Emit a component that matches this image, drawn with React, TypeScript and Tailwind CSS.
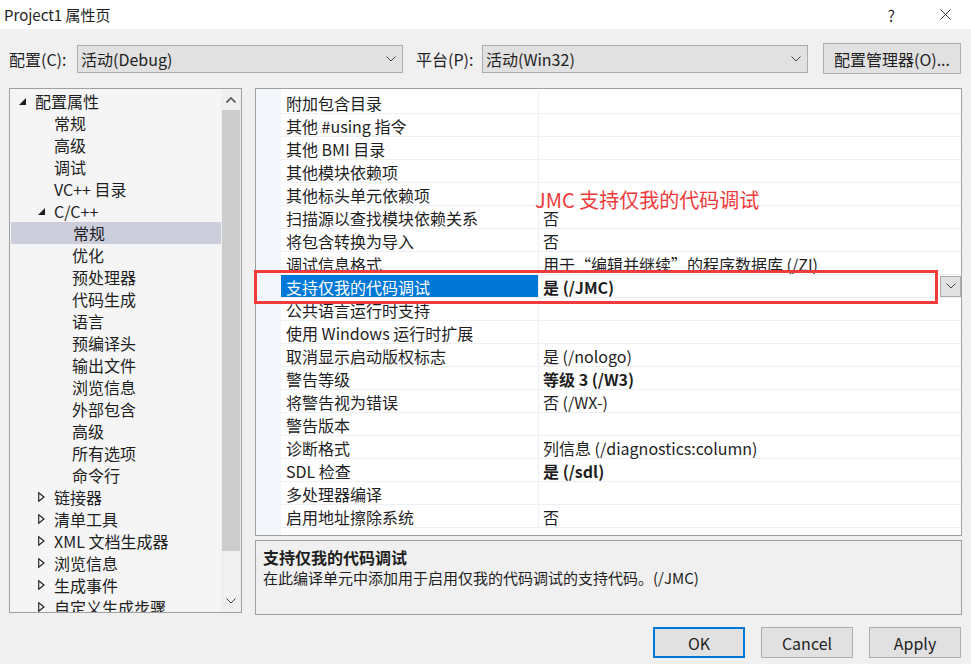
import React from 'react';

// ── data ──────────────────────────────────────────────────────────────────────

type TreeItem = { label: string; level: 0 | 1 | 2; arrow?: 'open' | 'closed'; selected?: boolean };

const TREE: TreeItem[] = [
  { label: '配置属性', level: 0, arrow: 'open' },
  { label: '常规', level: 1 },
  { label: '高级', level: 1 },
  { label: '调试', level: 1 },
  { label: 'VC++ 目录', level: 1 },
  { label: 'C/C++', level: 1, arrow: 'open' },
  { label: '常规', level: 2, selected: true },
  { label: '优化', level: 2 },
  { label: '预处理器', level: 2 },
  { label: '代码生成', level: 2 },
  { label: '语言', level: 2 },
  { label: '预编译头', level: 2 },
  { label: '输出文件', level: 2 },
  { label: '浏览信息', level: 2 },
  { label: '外部包含', level: 2 },
  { label: '高级', level: 2 },
  { label: '所有选项', level: 2 },
  { label: '命令行', level: 2 },
  { label: '链接器', level: 1, arrow: 'closed' },
  { label: '清单工具', level: 1, arrow: 'closed' },
  { label: 'XML 文档生成器', level: 1, arrow: 'closed' },
  { label: '浏览信息', level: 1, arrow: 'closed' },
  { label: '生成事件', level: 1, arrow: 'closed' },
  { label: '自定义生成步骤', level: 1, arrow: 'closed' },
];

const INDENT = ['pl-[9px]', 'pl-[28px]', 'pl-[46px]'];

type Prop = { name: string; value?: string; bold?: boolean; selected?: boolean };

const PROPS: Prop[] = [
  { name: '附加包含目录' },
  { name: '其他 #using 指令' },
  { name: '其他 BMI 目录' },
  { name: '其他模块依赖项' },
  { name: '其他标头单元依赖项' },
  { name: '扫描源以查找模块依赖关系', value: '否' },
  { name: '将包含转换为导入', value: '否' },
  { name: '调试信息格式', value: '用于“编辑并继续”的程序数据库 (/ZI)' },
  { name: '支持仅我的代码调试', value: '是 (/JMC)', bold: true, selected: true },
  { name: '公共语言运行时支持' },
  { name: '使用 Windows 运行时扩展' },
  { name: '取消显示启动版权标志', value: '是 (/nologo)' },
  { name: '警告等级', value: '等级 3 (/W3)', bold: true },
  { name: '将警告视为错误', value: '否 (/WX-)' },
  { name: '警告版本' },
  { name: '诊断格式', value: '列信息 (/diagnostics:column)' },
  { name: 'SDL 检查', value: '是 (/sdl)', bold: true },
  { name: '多处理器编译' },
  { name: '启用地址擦除系统', value: '否' },
];

// ── small drawings ────────────────────────────────────────────────────────────

function ChevronDown({ className = '' }: { className?: string }) {
  return (
    <svg width="10" height="6" viewBox="0 0 10 6" className={className}>
      <polyline points="0.5,0.5 5,5 9.5,0.5" fill="none" stroke="#444" strokeWidth="1" />
    </svg>
  );
}

function ChevronUp() {
  return (
    <svg width="10" height="6" viewBox="0 0 10 6">
      <polyline points="0.5,5.5 5,1 9.5,5.5" fill="none" stroke="#555" strokeWidth="1.6" />
    </svg>
  );
}

function Arrow({ kind }: { kind: 'open' | 'closed' }) {
  if (kind === 'open') {
    return (
      <svg width="7" height="7" viewBox="0 0 7 7">
        <polygon points="7,0 7,7 0,7" fill="#1e1e1e" />
      </svg>
    );
  }
  return (
    <svg width="7" height="10" viewBox="0 0 7 10">
      <polygon points="0.7,0.7 6,5 0.7,9.3" fill="none" stroke="#1e1e1e" strokeWidth="1.1" />
    </svg>
  );
}

function Combo({ text, width }: { text: string; width: string }) {
  return (
    <div className={`${width} h-[28px] bg-[#e1e1e1] border border-[#adadad] flex items-center pl-[3px] pr-[6px]`}>
      <span className="flex-1 text-[16px] leading-none text-[#1e1e1e]">{text}</span>
      <ChevronDown />
    </div>
  );
}

// ── panels ────────────────────────────────────────────────────────────────────

function Tree() {
  return (
    <div className="w-[233px] h-[525px] border border-[#a0a0a0] bg-[#f5f5f5] flex overflow-hidden">
      <div className="flex-1 overflow-hidden pt-px">
        {TREE.map((t, i) => (
          <div
            key={i}
            className={`h-[22px] flex items-center ${INDENT[t.level]} ${t.selected ? 'bg-[#cccedb] ml-px' : ''}`}
          >
            <span className="w-[16px] flex items-center">{t.arrow && <Arrow kind={t.arrow} />}</span>
            <span className="text-[16px] leading-none text-[#1e1e1e] whitespace-nowrap">{t.label}</span>
          </div>
        ))}
      </div>
      <div className="w-[20px] bg-[#f0f0f0] flex flex-col">
        <div className="h-[21px] flex items-center justify-center">
          <ChevronUp />
        </div>
        <div className="h-[441px] mx-px bg-[#cdcdcd]" />
        <div className="flex-1 flex items-end justify-center pb-[8px]">
          <ChevronDown />
        </div>
      </div>
    </div>
  );
}

function Grid() {
  return (
    <div className="relative w-[707px] h-[448px] border border-[#a0a0a0] bg-white flex">
      <div className="w-[25px] bg-[#f3f6fb]" />
      <div className="flex-1 pt-[2px]">
        {PROPS.map((p, i) => (
          <div key={i} className="h-[23px] flex border-b border-[#eeeff3]">
            <div
              className={`w-[258px] flex items-center pl-[5px] pt-px text-[16px] leading-none whitespace-nowrap border-r border-[#eeeff3] ${
                p.selected ? 'bg-[#0078d7] text-white' : 'text-[#1e1e1e]'
              }`}
            >
              {p.name}
            </div>
            <div className="flex-1 flex items-center pl-[4px]">
              <span className={`flex-1 pt-px text-[16px] leading-none whitespace-nowrap text-[#1e1e1e] ${p.bold ? 'font-bold' : ''}`}>
                {p.value ?? ''}
              </span>
              {p.selected && (
                <div className="w-[21px] h-[21px] bg-[#e1e1e1] border border-[#adadad] flex items-center justify-center">
                  <ChevronDown />
                </div>
              )}
            </div>
          </div>
        ))}
      </div>

      {/* annotation overlay */}
      <div className="absolute left-[-2px] top-[181px] w-[684px] h-[34px] border-[3px] border-[#ef3b3b]" />
      <div className="absolute left-[279px] top-[99px] text-[20px] leading-[24px] text-[#ef3b3b] whitespace-nowrap">
        JMC 支持仅我的代码调试
      </div>
    </div>
  );
}

function Description() {
  return (
    <div className="w-[707px] h-[75px] border border-[#a0a0a0] bg-[#f0f0f0] px-[7px] pt-[6px]">
      <div className="text-[16px] leading-[20px] font-bold text-[#1e1e1e]">支持仅我的代码调试</div>
      <div className="text-[15px] leading-[22px] text-[#1e1e1e]">在此编译单元中添加用于启用仅我的代码调试的支持代码。(/JMC)</div>
    </div>
  );
}

function DlgButton({ label, primary }: { label: string; primary?: boolean }) {
  return (
    <div
      className={`w-[92px] h-[31px] bg-[#e1e1e1] flex items-center justify-center text-[16px] leading-none text-[#1e1e1e] ${
        primary ? 'border-2 border-[#0078d7]' : 'border border-[#adadad]'
      }`}
    >
      {label}
    </div>
  );
}

// ── root ──────────────────────────────────────────────────────────────────────

export default function App() {
  return (
    <div className="w-[971px] h-[664px] bg-[#f0f0f0] flex flex-col overflow-hidden font-['Noto_Sans_CJK_SC','Noto_Sans',sans-serif]">
      {/* Title bar */}
      <div className="h-[29px] bg-white flex items-center pl-[4px] pr-[20px]">
        <span className="flex-1 text-[15px] leading-none text-[#1e1e1e]">Project1 属性页</span>
        <span className="text-[16px] leading-none text-[#333] mr-[45px]">?</span>
        <svg width="11" height="11" viewBox="0 0 11 11">
          <path d="M0.5 0.5 L10.5 10.5 M10.5 0.5 L0.5 10.5" stroke="#333" strokeWidth="1" />
        </svg>
      </div>

      {/* Config toolbar */}
      <div className="h-[31px] mt-[14px] flex items-center pl-[9px]">
        <span className="w-[68px] text-[16px] leading-none text-[#1e1e1e]">配置(C):</span>
        <Combo text="活动(Debug)" width="w-[326px]" />
        <span className="w-[66px] ml-[13px] text-[16px] leading-none text-[#1e1e1e]">平台(P):</span>
        <Combo text="活动(Win32)" width="w-[326px]" />
        <div className="ml-[15px] w-[138px] h-[31px] bg-[#e1e1e1] border border-[#adadad] flex items-center justify-center text-[16px] leading-none text-[#1e1e1e]">
          配置管理器(O)...
        </div>
      </div>

      {/* Main area */}
      <div className="mt-[14px] flex pl-[9px]">
        <Tree />
        <div className="ml-[13px] flex flex-col gap-[4px]">
          <Grid />
          <Description />
        </div>
      </div>

      {/* Buttons */}
      <div className="mt-[12px] flex justify-end gap-[16px] pr-[10px]">
        <DlgButton label="OK" primary />
        <DlgButton label="Cancel" />
        <DlgButton label="Apply" />
      </div>
    </div>
  );
}
